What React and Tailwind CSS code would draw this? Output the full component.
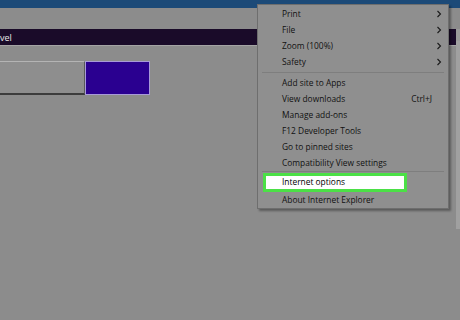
import React from "react";

const Chevron = () => (
  <svg width="6" height="8" viewBox="0 0 6 8" className="shrink-0">
    <path d="M1.5 1 L4.5 4 L1.5 7" fill="none" stroke="#1a1a1a" strokeWidth="1.1" />
  </svg>
);

function Item({ label, right, chevron }) {
  return (
    <div className="flex items-center h-4 pl-[24px] pr-[6px]">
      <span className="flex-1 whitespace-nowrap">{label}</span>
      {right && <span className="mr-[10px]">{right}</span>}
      {chevron && <Chevron />}
    </div>
  );
}

export default function App() {
  return (
    <div
      className="relative w-[460px] h-[320px] overflow-hidden bg-[#8c8c8c]"
      style={{ fontFamily: '"Open Sans", "Noto Sans", sans-serif' }}
    >
      <div className="h-2 bg-[#1c4a78]" />
      <div className="flex">
        <div className="flex-1">
          <div className="h-[21px]" />
          <div className="h-4 bg-[#1a0b29] flex items-center text-[9px] text-[#e8e8e8] leading-none">vel</div>
          <div className="h-px bg-[#a4a4a4]" />
          <div className="h-[15px]" />
          <div className="flex h-[34px]">
            <div className="w-[85px] border-t border-b-2 border-r border-t-[#b4b4b4] border-b-[#3c3c3c] border-r-[#5a5a5a] bg-[#8e8e8e]" />
            <div className="w-[65px] bg-[#2a0090] border border-[#a89ad8]" />
          </div>
        </div>
        <div className="w-[4px] mt-[21px] h-[200px] flex flex-col">
          <div className="h-[12px] bg-[#9a9a9a]" />
          <div className="flex-1 bg-[#a0a0a0]" />
        </div>
      </div>

      <div className="absolute left-[257px] top-[4px] w-[192px] h-[205px] bg-[#8f8f8f] border border-[#6e6e6e] shadow-[2px_2px_2px_rgba(0,0,0,0.35)] text-[8.4px] font-medium text-[#111] leading-none pt-[1px]">
        <Item label="Print" chevron />
        <Item label="File" chevron />
        <Item label="Zoom (100%)" chevron />
        <Item label="Safety" chevron />
        <div className="h-px bg-[#7e7e7e] mx-[4px] my-[2px]" />
        <Item label="Add site to Apps" />
        <Item label="View downloads" right="Ctrl+J" />
        <Item label="Manage add-ons" />
        <Item label="F12 Developer Tools" />
        <Item label="Go to pinned sites" />
        <Item label="Compatibility View settings" />
        <div className="h-px bg-[#7e7e7e] mx-[4px]" />
        <div className="ml-[5px] mt-[1px] w-[144px] h-[19px] border-[3px] border-[#4be046] bg-white flex items-center pl-[16px] text-black">
          Internet options
        </div>
        <div>
          <Item label="About Internet Explorer" />
        </div>
      </div>
    </div>
  );
}
